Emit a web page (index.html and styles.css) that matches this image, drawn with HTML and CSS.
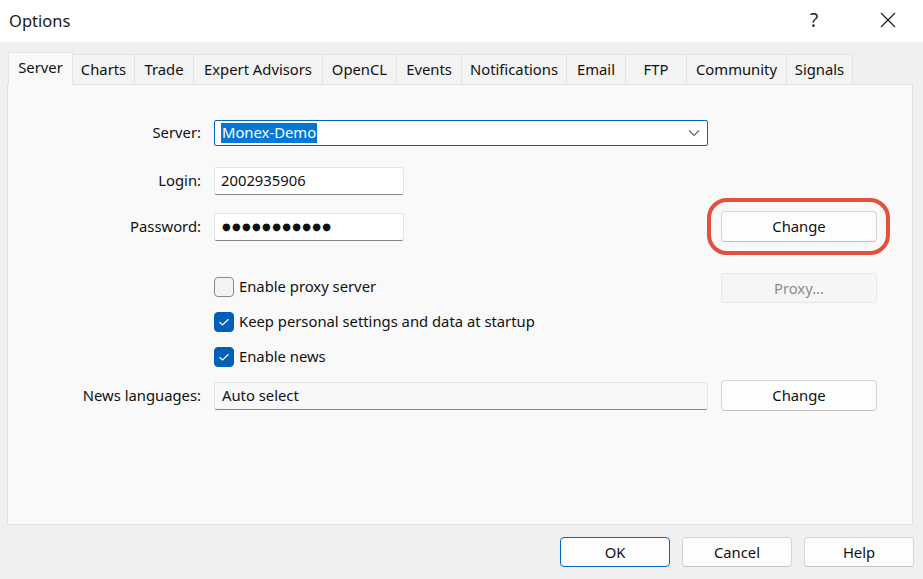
FILE: index.html
```html
<!DOCTYPE html>
<html>
<head>
<meta charset="utf-8">
<link rel="stylesheet" href="styles.css">
</head>
<body>
<div class="window">
  <div class="titlebar">
    <span class="title">Options</span>
    <span class="help-q">?</span>
    <span class="close-x">
      <svg width="16" height="16" viewBox="0 0 16 16"><path d="M1 1 L15 15 M15 1 L1 15" stroke="#1a1a1a" stroke-width="1.2" fill="none"/></svg>
    </span>
  </div>
  <div class="tabs">
    <div class="tab active t-server">Server</div>
    <div class="tab t-charts">Charts</div>
    <div class="tab t-trade">Trade</div>
    <div class="tab t-ea">Expert Advisors</div>
    <div class="tab t-opencl">OpenCL</div>
    <div class="tab t-events">Events</div>
    <div class="tab t-notif">Notifications</div>
    <div class="tab t-email">Email</div>
    <div class="tab t-ftp">FTP</div>
    <div class="tab t-comm">Community</div>
    <div class="tab t-signals">Signals</div>
  </div>
  <div class="panel">
    <div class="row r-server">
      <label class="lbl">Server:</label>
      <div class="combo"><span class="sel">Monex-Demo</span>
        <svg class="chev" width="12" height="8" viewBox="0 0 12 8"><path d="M1 1.5 L6 6.5 L11 1.5" stroke="#5f5f5f" stroke-width="1.1" fill="none"/></svg>
      </div>
    </div>
    <div class="row r-login">
      <label class="lbl">Login:</label>
      <div class="edit short">2002935906</div>
    </div>
    <div class="row r-pass">
      <label class="lbl">Password:</label>
      <div class="edit short dots">●●●●●●●●●●●</div>
      <div class="btn-wrap highlight"><div class="btn">Change</div></div>
    </div>
    <div class="row r-proxy">
      <div class="check"><span class="box"></span><span>Enable proxy server</span></div>
      <div class="btn disabled">Proxy...</div>
    </div>
    <div class="row r-keep">
      <div class="check"><span class="box on"><svg width="20" height="20" viewBox="0 0 20 20"><path d="M5.5 10.2 L8.6 13 L14.5 7.2" stroke="#fff" stroke-width="1.2" fill="none"/></svg></span><span>Keep personal settings and data at startup</span></div>
    </div>
    <div class="row r-news">
      <div class="check"><span class="box on"><svg width="20" height="20" viewBox="0 0 20 20"><path d="M5.5 10.2 L8.6 13 L14.5 7.2" stroke="#fff" stroke-width="1.2" fill="none"/></svg></span><span>Enable news</span></div>
    </div>
    <div class="row r-lang">
      <label class="lbl">News languages:</label>
      <div class="edit readonly">Auto select</div>
      <div class="btn">Change</div>
    </div>
  </div>
  <div class="footer">
    <div class="btn wide default">OK</div>
    <div class="btn wide">Cancel</div>
    <div class="btn wide">Help</div>
  </div>
</div>
</body>
</html>
```
FILE: styles.css
```css
* { box-sizing: border-box; }
html, body { margin: 0; padding: 0; }
body {
  width: 923px;
  height: 579px;
  background: #f0f0f0;
  font-family: "Noto Sans", "Liberation Sans", sans-serif;
  font-size: 14.8px;
  color: #000;
  overflow: hidden;
}
.window { display: flex; flex-direction: column; height: 579px; }

.titlebar {
  height: 42px;
  background: #fff;
  display: flex;
  align-items: center;
  padding-left: 9px;
  position: relative;
}
.title { font-size: 16.5px; color: #1a1a1a; margin-top: -2px; }
.help-q {
  margin-left: auto;
  font-size: 19px;
  color: #222;
  width: 16px;
  text-align: center;
  margin-right: 58px;
  margin-top: -3px;
}
.close-x { width: 16px; height: 16px; margin-right: 27px; display: flex; margin-top: -2px; }

.tabs {
  margin-top: 10px;
  margin-left: 8px;
  height: 32px;
  display: flex;
  align-items: flex-end;
  position: relative;
  z-index: 2;
}
.tab {
  height: 30px;
  background: #f3f3f3;
  border: 1px solid #e3e3e3;
  border-bottom: none;
  margin-left: -1px;
  display: flex;
  align-items: center;
  justify-content: center;
  white-space: nowrap;
  color: #111;
  padding-bottom: 1px;
}
.tab.active {
  height: 33px;
  margin-bottom: -1px;
  background: #f9f9f9;
  margin-left: 0;
  border-color: #e5e5e5;
  padding-bottom: 4px;
  position: relative;
  z-index: 3;
}
.t-server { width: 65px; }
.t-charts { width: 63px; }
.t-trade { width: 60px; }
.t-ea { width: 130px; }
.t-opencl { width: 75px; }
.t-events { width: 66px; }
.t-notif { width: 106px; }
.t-email { width: 60px; }
.t-ftp { width: 62px; }
.t-comm { width: 101px; }
.t-signals { width: 67px; }

.panel {
  margin-left: 7px;
  width: 906px;
  height: 441px;
  background: #f9f9f9;
  border: 1px solid #e2e2e2;
  padding-top: 35px;
  display: flex;
  flex-direction: column;
  position: relative;
  z-index: 1;
}
.row {
  display: grid;
  grid-template-columns: 193px 494px 156px;
  column-gap: 13px;
  align-items: center;
}
.lbl { text-align: right; color: #111; grid-column: 1; padding-bottom: 2px; }
.r-server { height: 26px; }
.r-login { height: 28px; margin-top: 21px; }
.r-pass { height: 31px; margin-top: 16px; }
.r-proxy { height: 30px; margin-top: 31px; }
.r-keep { height: 20px; margin-top: 9px; }
.r-news { height: 20px; margin-top: 15px; }
.r-lang { height: 31px; margin-top: 13px; }

.combo {
  grid-column: 2;
  height: 26px;
  border: 1px solid #0067c0;
  border-radius: 2px;
  background: #fff;
  display: flex;
  align-items: center;
  padding-left: 6px;
}
.sel {
  background: #0078d7;
  color: #fff;
  height: 20px;
  line-height: 19px;
  padding: 0 1px;
}
.chev { margin-left: auto; margin-right: 7px; }

.edit {
  grid-column: 2;
  height: 28px;
  background: #fff;
  border: 1px solid #e5e5e5;
  border-bottom: 1px solid #868686;
  border-radius: 3px;
  display: flex;
  align-items: center;
  padding-left: 6px;
  padding-bottom: 2px;
  color: #111;
}
.edit.short { width: 190px; }
.edit.readonly { background: #f8f8f8; padding-left: 7px; }
.dots {
  font-family: "DejaVu Sans", sans-serif;
  font-size: 10px;
  letter-spacing: 1.3px;
  padding-left: 7px;
  padding-bottom: 0;
}

.btn {
  height: 31px;
  background: #fdfdfd;
  border: 1px solid #d5d5d5;
  border-bottom-color: #c3c3c3;
  border-radius: 4px;
  display: flex;
  align-items: center;
  justify-content: center;
  color: #111;
  grid-column: 3;
  padding-bottom: 1px;
}
.btn.disabled {
  background: #f6f6f6;
  border-color: #e6e6e6;
  color: #8c8c8c;
  height: 30px;
}
.btn-wrap { grid-column: 3; position: relative; }
.highlight::after {
  content: "";
  position: absolute;
  left: -14px;
  right: -13px;
  top: -13px;
  bottom: -13px;
  border: 4px solid #e4503a;
  border-radius: 20px;
}

.check {
  grid-column: 2 / 4;
  display: flex;
  align-items: center;
  gap: 5px;
  color: #111;
  white-space: nowrap;
}
.check span:last-child { margin-top: -2px; }
.r-proxy .check { grid-column: 2; margin-top: -3px; }
.box {
  width: 20px;
  height: 20px;
  border-radius: 4px;
  border: 1px solid #8a8a8a;
  background: #f3f3f3;
  display: flex;
  flex: none;
}
.box.on { background: #005fb8; border-color: #005fb8; }
.box.on svg { margin: -1px; }

.footer {
  display: flex;
  justify-content: flex-end;
  gap: 12px;
  padding-top: 12px;
  padding-right: 9px;
}
.btn.wide { width: 110px; height: 30px; }
.btn.default { border: 1px solid #0067c0; }
```
